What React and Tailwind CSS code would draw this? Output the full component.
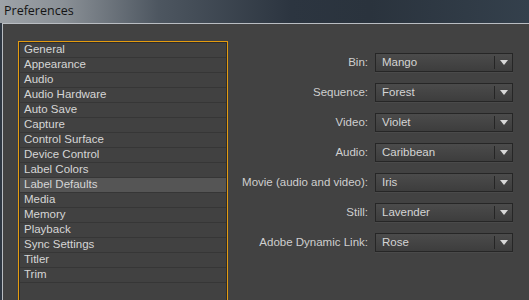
const ITEMS = [
  'General', 'Appearance', 'Audio', 'Audio Hardware', 'Auto Save', 'Capture',
  'Control Surface', 'Device Control', 'Label Colors', 'Label Defaults', 'Media',
  'Memory', 'Playback', 'Sync Settings', 'Titler', 'Trim',
]

const FIELDS = [
  { label: 'Bin:', value: 'Mango' },
  { label: 'Sequence:', value: 'Forest' },
  { label: 'Video:', value: 'Violet' },
  { label: 'Audio:', value: 'Caribbean' },
  { label: 'Movie (audio and video):', value: 'Iris' },
  { label: 'Still:', value: 'Lavender' },
  { label: 'Adobe Dynamic Link:', value: 'Rose' },
]

function Select({ value }) {
  return (
    <div className="w-[138px] h-[19px] border border-[#262626] bg-gradient-to-b from-[#4b4b4b] to-[#3d3d3d] flex items-center shadow-[0_1px_0_#4a4a4a]">
      <span className="flex-1 pl-[6px] text-[#d4d4d4] leading-none">{value}</span>
      <div className="w-px h-[13px] bg-[#252525]" />
      <div className="w-[17px] flex justify-center">
        <svg width="8" height="5" viewBox="0 0 8 5"><path d="M0 0h8L4 5z" fill="#d8d8d8" /></svg>
      </div>
    </div>
  )
}

export default function App() {
  return (
    <div className="w-[529px] h-[300px] overflow-hidden flex flex-col bg-[#2e3742] text-[11.5px]"
      style={{ fontFamily: '"Liberation Sans", Arial, sans-serif' }}>
      {/* title bar */}
      <div className="h-[23px] shrink-0 flex items-center pl-[4px] bg-[linear-gradient(90deg,#9ea3a8_0%,#8a9096_12%,#4d5660_30%,#2c3540_55%,#2a333d_70%,#34404c_100%)]">
        <span className="text-[12.5px] text-[#141414]" style={{ fontFamily: '"Open Sans", "Liberation Sans", sans-serif' }}>Preferences</span>
      </div>

      {/* window client */}
      <div className="flex-1 ml-[2px] border-l border-t border-[#b9bdc2] bg-[#424242] flex">
        <div className="pl-[15px] pt-[17px]">
          <div className="w-[210px] h-[270px] border border-[#e49b0f] bg-[#414141]">
            <div className="border border-[#2c2c2c] h-full">
              {ITEMS.map(item => (
                <div key={item}
                  className={`h-[15px] border-b border-[#363636] pl-[4px] flex items-center text-[#d6d6d6] ${item === 'Label Defaults' ? 'bg-[#555555]' : ''}`}>
                  {item}
                </div>
              ))}
            </div>
          </div>
        </div>

        <div className="flex-1 pt-[29px] flex flex-col gap-[11px] pl-[6px]">
          {FIELDS.map(f => (
            <div key={f.label} className="flex items-center justify-end gap-[7px] pr-[16px]">
              <span className="text-[#cfcfcf]">{f.label}</span>
              <Select value={f.value} />
            </div>
          ))}
        </div>
      </div>
    </div>
  )
}
